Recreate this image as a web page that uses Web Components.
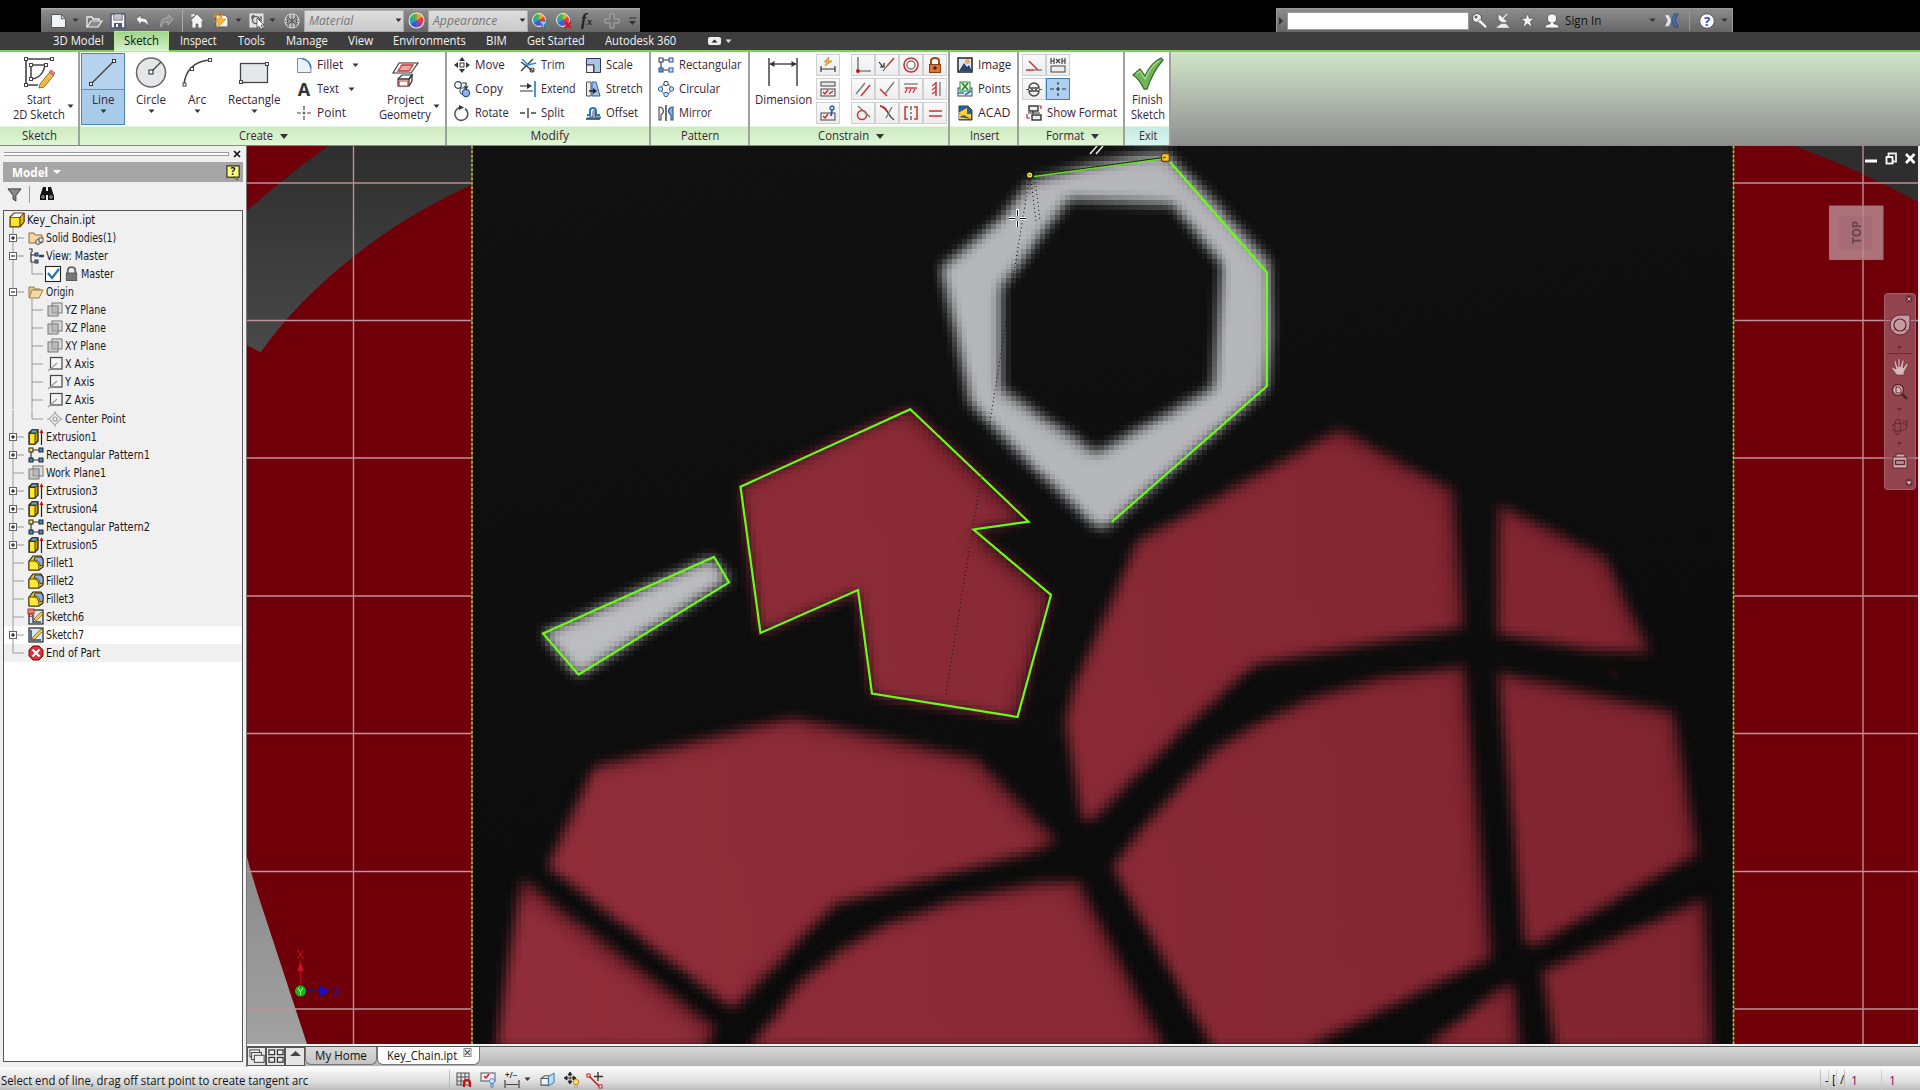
<!DOCTYPE html>
<html lang="en"><head><meta charset="utf-8"><title>Key_Chain.ipt</title>
<style>html,body{margin:0;padding:0;background:#000;overflow:hidden}body{width:1920px;height:1090px}</style></head>
<body><cad-app></cad-app>
<script>
const UI='"Open Sans","Noto Sans",sans-serif', TREE='"DejaVu Sans Condensed","DejaVu Sans",sans-serif';
const P=(d,s='#333',w=1.3,f='none')=>`<path d="${d}" stroke="${s}" stroke-width="${w}" fill="${f}"/>`;
const sq=(x,y,c='#444',f='#fff',r=1.5)=>`<rect x="${x-r}" y="${y-r}" width="${2*r}" height="${2*r}" fill="${f}" stroke="${c}"/>`;
const C=(x,y,r,s='#333',w=1.2,f='none')=>`<circle cx="${x}" cy="${y}" r="${r}" stroke="${s}" stroke-width="${w}" fill="${f}"/>`;
const B=(x,y,w,h,f='#fff',s='#333',sw=1)=>`<rect x="${x}" y="${y}" width="${w}" height="${h}" fill="${f}" stroke="${s}" stroke-width="${sw}"/>`;
const wheel=(x=8,y=8,r=7)=>`<g transform="translate(${x} ${y})">`+['#f0a020','#e8384a','#9a3cc0','#3a5ad8','#28a0c8','#40b848'].map((c,i)=>`<path transform="rotate(${i*60})" d="M0 0V${-r}A${r} ${r} 0 0 1 ${r*.866} ${-r*.5}Z" fill="${c}"/>`).join('')+`<circle r="${r}" fill="none" stroke="#eee"/></g>`;
const I={
caret:P('M1 1h5l-2.500 3z','none',0,'#333'), caretw:P('M0 0h8l-4 4z','none',0,'#fff'),
/* quick access */
new:P('M1.500 1.500h10l4 4v9h-14z','#555',1,'#f3f4f6')+P('M11.500 1.500v4h4','#777'),
open:P('M1 14V4h5l1 2h6v2','#eee',1.3,'#777')+P('M1 14l4-6h11l-4 6z','#eee',1.2,'#8c8c8c'),
save:B(1,1,14,14,'#f4f4f4','#4d5b74',1.5)+B(4,1,8,6,'#fff','#59606c')+P('M5 3h6M5 5h6','#888',1)+B(4,10,8,5,'#4d5b74','none')+B(6,11,2,3,'#fff','none'),
undo:P('M2 6l5-4v3c5 0 8 2 7 9c-1-4-3-5-7-5v3z','#555',.7,'#f5f5f5'),
redo:P('M14 6l-5-4v3c-5 0-8 2-7 9c1-4 3-5 7-5v3z','#bbb',.8,'#8c8c8c'),
home:P('M1 8L8 1l7 7h-2v7h-4v-4H7v4H3V8z','#666',.8,'#f5f5f5')+P('M3 4V2h2v1','#eee'),
bolt:P('M3 2h9l3 3v9H3z','#555',1,'#f4f4f4')+P('M10 0L2 9h4l-2 6l9-9H8z','#d47c00',.6,'#ffb62e')+P('M1 4l4-3','#d90',2),
pick:B(1,1,13,13,'#ddd','#eee')+C(7,7,3.500,'#555')+P('M3 3h3M3 3v3M12 3v8','#555')+P('M8 5l7 7h-3l2 4l-2 0l-2-3l-2 2z','#333',.7,'#fff'),
sphere:C(8,8,7,'#eee',1,'#bbb')+P('M1 8h14M8 1v14M3 3l10 10M13 3L3 13M2 5c4 2 8 2 12 0M2 11c4-2 8-2 12 0M5 2c-2 4-2 8 0 12M11 2c2 4 2 8 0 12','#555',.8),
wheel:wheel(), wheel2:wheel(7,7,6.500)+P('M7 8h9l-3.500 4v3h-2v-3z','#167',.7,'#6fd0f0'), wheel3:wheel(7,7,6.500)+P('M9 9l6 6M15 9l-6 6','#d01818',2.200),
plus:P('M6 1h4v5h5v4h-5v5H6v-5H1V6h5z','#a8a8a8',1,'#777'),
/* help strip */
key:C(5,5,4.500,'#555',1,'#eee')+P('M8 6l7 7l-1 3L8.500 11l-3-2z','#555',.6,'#eee')+C(4,4,1,'#555',1,'#555'),
dish:P('M3 1c-3 6 3 12 9 8z','#555',.7,'#f4f4f4')+P('M7 6l5-5M2 15h11l-3-3H6z','#eee',1.300,'#eee'),
star:P('M8 .5l2 5.200h5.500L11 9l2 6.500L8 11.500L3 15.500L5 9L.5 5.700H6z','#555',.8,'#f4f4f4'),
man:C(8,5.500,4.500,'#444',.8,'#f4f4f4')+P('M6 9h4v2c3 0 5 1 5 4H1c0-3 2-4 5-4z','#444',.7,'#f4f4f4')+C(8,5.500,4,'none',0,'#f4f4f4'),
xch:P('M1 2h4l3 6l-3 6H1l3-6z','#999',.6,'#e3e9f4')+P('M15 1h-4L8 8l3 7h4l-3-7z','#234',.6,'#4869b8'),
help:C(8,8,7.300,'#555',1,'#f8f8f8')+`<text x="8" y="13" font-family='Open Sans' font-weight="700" font-size="13" text-anchor="middle" fill="#2858b8">?</text>`,
/* large tools */
start:P('M2 2h26M2 2v26h12','#444',1.600)+P('M7 8h16M7 8v14c6 0 12-4 14-14','#444',1.500)+sq(2,2)+sq(28,2)+sq(2,28)+sq(7,8)+sq(22,8)+sq(7,22)+P('M16 27l10-12l4 3L20 30l-5 1z','#8a5b12',.9,'#f0bc4c')+P('M25 15l2-2l4 3l-2 2z','#944',.7,'#e88'),
line:P('M2 28L26 4','#444',1.500)+sq(3,27,'#333')+sq(26,4,'#333'),
circle:`<circle cx="15" cy="15.500" r="14.500" fill="#e6e7e9" stroke="#666" stroke-width="1.500"/>`+P('M15 15L25 5','#444',1.300)+sq(15,15,'#222','#fff',2),
arc:P('M2 28C3 14 12 4 28 3','#444',1.500)+sq(2.500,27.500)+sq(10,12)+sq(28,3),
rect:B(1.500,6.500,27,19,'#e5e7ea','#444',1.300)+sq(28,7)+sq(2,25),
project:P('M9 6h19l-7 10H3z','#333',1.100,'#fff')+P('M12 8h11l-4 6H8z','#c33',1.300,'#eaa')+P('M8 22l4-4h10l-3 4v7H8z','#333',1.200,'#fff')+P('M8 22h11l3-4v6l-3 5','#333')+P('M9 24h9v5H9z','#c33',1.200,'#fff'),
dim:P('M1 1v28M29 1v28','#444',1.500)+P('M2 7h26','#444',1.400)+P('M1.500 7l5-3v6zM28.500 7l-5-3v6z','none',0,'#333'),
check:P('M2 18l7-6l5 7C18 10 23 4 30 1l2 2C25 11 20 20 16 32h-3C10 26 7 21 2 18z','#3d6f30',1.300,'#6fb558')+P('M5 17l4-3l5 8C18 13 23 7 28 4','#a8dc90',1.200),
/* small tools */
fillet:P('M1.500 15.500V1.500H6c6 1 9 6 9 14z','#888',1,'#e9f1f9')+P('M6 1.500c6 1 9 6 9 10','#2f7fcf',1.600),
text:`<text x="8" y="14.500" font-family='Open Sans' font-weight="700" font-size="18" text-anchor="middle" fill="#333">A</text>`,
point:P('M8 1v4M8 11v4M1 8h4M11 8h4M6.500 8h3M8 6.500v3','#444',1.200),
move:B(6,6,4,4,'#fff','#333')+P('M8 0l3 4H5zM8 16l3-4H5zM0 8l4-3v6zM16 8l-4-3v6z','none',0,'#333'),
copy:C(4,4,3.300,'#345')+P('M8 2h4v5M10 5l2 3l2-3','#333',1.200)+C(9,10,3.300,'#456',1,'#dce9f6')+C(12,12,3.600,'#2450a0',1.200,'#8fb4e0'),
rotate:P('M11 3.500A6.500 6.500 0 1 1 6 2.500','#555',1.600)+P('M5 0l5 2.500L5 5z','none',0,'#333'),
trim:P('M1 5l12 9M1 14L13 2','#444',1.500)+P('M2 2l6 6M8 8l8-2','#2a90d8',1.600)+C(12,13,2,'#444'),
extend:P('M0 5h10','#444',1.200)+P('M7 2l5 3l-5 3z','none',0,'#333')+P('M0 10h13','#555',1.200)+P('M15 0v16','#2a8fd8',1.800),
split:P('M0 8h5M11 8h5M8 3v10','#444',1.400),
scale:P('M1.500 1.500h14v14H9V8H1.500z','#335',1,'#a9c6e6')+B(1.500,8,7,7.500,'#eee','#444'),
stretch:P('M1.500 1v14H6V1z','#555',1,'#eee')+P('M7 1h4l4 14H7z','#2a5fa8',1,'#9fc1e6')+P('M4 10h5','#222',1.500)+P('M8 7l4 3l-4 3z','none',0,'#222'),
offset:P('M1 14h14M2 10h3V6c0-4 6-4 6 0v4h4','#2a78c0',2)+P('M2 13h14M4 12h4V7c0-2 2-2 2 0v5h6','#345',1),
rpat:P('M4 3h8M3 5v6M4 13h8','#333',1.100)+B(1,1,4,4,'#fff','#234')+B(11,1,4,4,'#cfe0f5','#2450a0')+B(1,11,4,4,'#6c9adf','#2450a0')+B(11,11,4,4,'#cfe0f5','#2450a0'),
cpat:C(8,8,5,'#555',1)+C(8,2.500,2.200,'#333',1,'#fff')+C(8,13.500,2.200,'#2a5fa8',1,'#cfe0f5')+C(2.500,8,2.200,'#2a5fa8',1,'#cfe0f5')+C(13.500,8,2.200,'#2a5fa8',1,'#cfe0f5'),
mirror:P('M8 0v16','#333',1.400)+P('M1 15V2c4 0 5 3 4 6L3 10v5z','#444',1.100,'#fff')+P('M15 15V2c-4 0-5 3-4 6l2 2v5z','#2450a0',1.100,'#8fb4e0'),
autod:P('M9 0L4 5h3l-2 4l7-5H8z','#c47400',.6,'#ffb62e')+P('M1 9v6M15 9v6M1 12h14','#333',1.200),
parm:B(1,1,14,4,'#e8e8e8','#444')+B(1,8,14,7,'#eee','#444')+P('M3 11l2 2l3-4M9 13l4-3','#c22',1.300),
parm2:B(1,8,14,7,'#eee','#444')+P('M3 11l2 2l3-4','#c22',1.300)+P('M11 11l1-6','#2a5fa8',1.800)+C(12,3,2,'#2a5fa8',1.300,'#cfe0f5'),
coin:P('M3 0v12','#555',1.200)+P('M5 14h11','#555',1)+C(3,14,1.200,'#c11',1.500,'#c11'),
coll:P('M0 5l4 5M1 10h4v-4','#222',1.200)+P('M4 14l4-5','#555',1.200)+P('M8 9l7-8','#c33',1.500),
conc:C(8,8,7,'#c33',1.600)+C(8,8,4,'#777',1.400,'#fff'),
lock:P('M4 8V4c0-4 8-4 8 0v4','#9b4a20',2)+B(2.500,7.500,11,8,'#d8733a','#8b3d18')+C(8,11,1.300,'#521','1','#521'),
para:P('M1 13L10 2','#777',1.300)+P('M6 15L15 4','#c33',1.500),
perp:P('M15 1L6 13','#777',1.300)+P('M1 8l7 7','#c33',1.500),
horiz:P('M1 3h14','#777',1.300)+P('M2 7h12','#c33',1.400)+P('M4 8l-2 4M8 8l-2 4M12 8l-2 4','#c33',1.200),
vert:P('M13 1v14','#777',1.300)+P('M9 1v14','#c33',1.500)+P('M9 2L5 5M9 6L5 9M9 10l-4 3','#c33',1.200),
tang:C(7,10,4.500,'#c33',1.500)+P('M3 1l12 11','#777',1.300),
smooth:P('M1 1c9 1 6 9 14 14','#444',1.300)+P('M1 1c4 1 6 4 7 6','#c33',1.300)+P('M13 2L7 13','#777',1.300),
sym:P('M5 2H2v12h3M11 2h3v12h-3','#c33',1.500)+P('M8 1v4M8 7v2M8 11v4','#555',1.300),
eq:P('M2 6h13M2 11h13','#c33',1.500),
image:B(1,1,14,14,'#dceaf8','#222',1.500)+P('M2 14l5-8l3 4l2-2l3 6z','none',0,'#2a456c')+C(10.500,4.500,1.800,'#e8842c',1,'#ffb74a'),
points:B(1,7,14,8,'#eee','#445')+B(3,1,10,9,'#e7f5e4','#2a8a3a')+P('M5 2l6 7M11 2L5 9','#2a8a3a',1.800)+P('M1 12h6M8 14l6-4','#2a78c0',1.600),
acad:P('M2 1h9l4 4v10H2z','#345',1,'#2a5fa8')+P('M1 8l9-5v8z','none',0,'#ffd32c')+P('M2 9h12v5H2z','none',0,'#f0d040')+P('M2 12l5-2l7 4z','none',0,'#557'),
constr:P('M0 13h8','#c33',1.500)+P('M3 4l9 9','#c33',1.500)+P('M8 13h8','#777',1.300),
driven:P('M1 1v6M15 1v6M4 1v6M12 1v6M1 4h3M12 4h3M6 2l4 4M10 2L6 6','#333',1.100)+B(1,9,14,6,'#eee','#444'),
center:P('M3 7a5 5 0 0 1 10 0zM3 10a5 5 0 0 0 10 0z','#444',1.400)+P('M0 8.500h3M5 8.500h2M9 8.500h2M13 8.500h3','#555',1.200),
cpoint:P('M0 8h4M12 8h4M8 1v3M8 12v3M6 8h4M8 6v4','#333',1.200),
sform:B(3,1,9,5,'#eee','#222',1.300)+B(6,10,9,5,'#eee','#222',1.300)+P('M13 1h2v3M1 9v4h3','#c22',1.200)+P('M2 8h12M7 6v3','#333',1.200),
/* browser */
funnel:P('M1 2h14L9.500 9v6l-3-2V9z','#333',1,'#8b8b8b'),
bino:P('M4 1h3v4h2V1h3l3 9v4H9V9H7v5H1v-4z','none',0,'#111')+C(4,11,1.300,'#ccc',.8)+C(12,11,1.300,'#ccc',.8),
q:B(1,1,13,12,'#ffff7d','#222',1.200)+P('M8 13l4 3v-3z','#222',.8,'#ff8')+`<text x="7.500" y="11" font-family='Open Sans' font-weight="700" font-size="11" text-anchor="middle" fill="#111">?</text>`,
part:P('M1 5l4-4h10v9l-4 5H1z','#5a3c00',1.100,'#fff')+B(1.500,5.500,9.500,9,'#ffe524','#7a5a10')+P('M11 14V5l4-4v9z','#5a3c00',1,'#e4b818'),
bodies:P('M1 13V3h5l1 2h7v8z','#8a6d3b',1,'#f0d8a6')+C(10,12,2.500,'#555',1,'#ddd')+B(11,8,4,4,'#eee','#555'),
view:P('M1 1h3v3M3 4v10h4M3 7h4','#333',1.200)+B(7,5,3,3,'#5a8cd0','#234')+B(7,12,3,3,'#5a8cd0','#234')+P('M11 8h5','#246',2.500),
lockg:P('M4 8V5c0-5 8-5 8 0v3','#666',2)+B(2.500,7.500,11,8,'#777','#555'),
chk:B(.5,.5,15,15,'#fff','#222',1.100)+P('M3 7l4 5l7-9','#2a6fb0',2.200),
folder:P('M1 13V3h5l1 2h5v2','#9a7b43',1,'#e6c98c')+P('M1 14l3-8h11l-4 8z','#9a7b43',1,'#f3dba8'),
plane:B(5,1,10,10,'#ddd','#777')+B(1,4,10,10,'#c9c9c9','#777')+B(5,4,6,7,'#b9b9b9','#888',.8),
axis:B(3.500,1.500,11.500,11.500,'#f4f4f4','#444',1.200)+P('M1 15l9-8','#999',1.200),
cpt:P('M8 2l6 6l-6 6l-6-6z','#aaa',1.200)+C(8,8,2,'#999')+P('M8 0v3M8 13v3M0 8h3M13 8h3','#aaa',1),
extr:P('M1 4l3-3h6v11l-3 3H1z','#222',1.300,'#c8a000')+B(1.500,4.500,5.500,10.500,'#ffe936','#554000')+P('M2 4l2-3h6l-2 3z','#222',.8,'#7aa6d0')+P('M13.500 16V4','#222',1.200)+P('M11.500 4l2-4l2 4z','none',0,'#c11'),
pat:P('M5 3h6M3 5v6M5 13h6','#333',1.200)+B(1,1,4,4,'#ffe936','#222')+B(11,1,4,4,'#4a86c8','#222')+B(1,11,4,4,'#4a86c8','#222')+B(11,11,4,4,'#4a86c8','#222'),
fil:P('M1 6l4-5h8l2 3v8l-4 3H1z','#222',1.200,'#f2cf10')+P('M1 6h6c3 1 4 4 4 9H1z','#554000',1,'#ffe936')+P('M7 2h6l2 3v5l-3 1c0-4-2-6-6-6z','#223',.8,'#8fb0e0'),
sk:B(1,1,14,14,'#d8e8f6','#222',1.200)+P('M3 3v10h10','#345',1.500)+P('M5 10l8-8l2 2l-8 8l-3 1z','#8a5b12',.8,'#f0cc4c'),
sk6:B(1,1,14,14,'#d8e8f6','#222',1.200)+P('M5 6v7h8','#345',1.500)+P('M6 10l7-7l2 2l-7 7z','#8a5b12',.8,'#f0cc4c')+B(0,0,6,5,'#e98060','#a33')+C(3,6,1.500,'#a33'),
end:P('M5 1h6l4 4v6l-4 4H5l-4-4V5z','#800',1,'#d8323e')+P('M4.500 4.500l7 7M11.500 4.500l-7 7','#fff',2.200),
/* window and status */
casc:B(1,1,11,8,'#eee','#333')+B(3,4,11,8,'#eee','#333')+B(6,7,11,8,'#eee','#333'),
tile:B(1,1,6,5,'#eee','#333',1.300)+B(10,1,6,5,'#eee','#333',1.300)+B(1,9,6,5,'#eee','#333',1.300)+B(10,9,6,5,'#eee','#333',1.300),
up:P('M3 7l5.500-5l5.500 5z','none',0,'#444'),
close:B(1,.5,7,8,'none','#888')+P('M2 2l5 5M7 2L2 7','#555',1.100),
grid:P('M1 1h12v12H1zM5 1v12M9 1v12M1 5h12M1 9h12','#555',1.100)+P('M8 15v-4c0-4 6-4 6 0v4','#c11',2.200),
snap:B(1,1,14,8,'#eef','#555')+P('M4 4l2 2l3-4','#c11',1.300)+C(12,9,2.500,'#58c',1,'#cde6fa')+B(11,12,2,3,'#cde','#58c'),
tol:`<text x="1" y="6" font-family="Open Sans" font-size="8" font-weight="600" fill="#222">+/−</text>`+P('M1 8v8M15 8v8M2 12.500h12','#444',1.200),
slice:P('M1 7h8v7H1zM1 7l4-3h5','#555',1.100,'#f2f2f2')+P('M9 5l6-4v10l-6 4z','#3470a8',1,'#b8dcf4'),
dof:P('M6 0l2 3H4zM6 12l2-3H4zM0 6l3-2v4zM12 6l-3-2v4zM6 2v8M2 6h8','#222',.8,'#222')+C(12,10,2.700,'#d08a10',1,'#ffe060')+B(11,13,2,2.500,'#eee','#888',.6),
con:P('M1 3l12 12','#c11',1.500)+B(0,2,3,3,'#fff','#c11')+B(12,13,3,3,'#fff','#c11')+P('M11 0v9M7 4.500h9','#333',1.300)
};
const ic=(n,s=16,vb=16)=>`<svg width="${s}" height="${s}" viewBox="0 0 ${vb} ${vb}" style="display:block;overflow:visible">${I[n]}</svg>`;
const car=(c='#333')=>`<svg width="7" height="5" viewBox="0 0 7 5" style="display:block"><path d="M.5 .5h6l-3 3.500z" fill="${c}"/></svg>`;
const T=(t,w,extra='')=>`<fit-text w="${w}" ${extra?`style="${extra}"`:''}>${t}</fit-text>`;
/* Builds flex items from [left, width, markup], turning the spacing between them into margins. */
const row=(start,items)=>{let x=start;return items.map(([l,w,h,s=''])=>{const m=l-x;x=l+w;return `<div style="flex:none;margin-left:${m}px;width:${w}px;${s}">${h}</div>`}).join('')};
const define=(name,render,after)=>customElements.define(name,class extends HTMLElement{
 constructor(){super();this.attachShadow({mode:'open'})}
 connectedCallback(){this.shadowRoot.innerHTML=render(this);after&&after(this)}
});

define('fit-text',e=>`<style>:host{display:inline-block;width:${e.getAttribute('w')}px;white-space:pre;flex:none}span{display:inline-block;transform-origin:0 50%}</style><span><slot></slot></span>`,
 e=>{const s=e.shadowRoot.querySelector('span'),n=s.offsetWidth;if(n)s.style.transform=`scaleX(${e.getAttribute('w')/n})`});

define('quick-bar',()=>`<style>:host{display:block;width:599px;height:24px;margin-left:41px;background:linear-gradient(#999,#8a8a8a 10%,#666);border-top:1px solid #aaa;box-sizing:border-box}
.r{display:flex;align-items:center;height:23px}.c{height:20px;background:linear-gradient(#dedede,#c9c9c9);box-shadow:0 0 0 1px #aaa;display:flex;align-items:center;justify-content:space-between;padding:0 1px 0 4px;box-sizing:border-box;font:italic 12px ${UI};color:#777}.f{font:italic 700 17px "Liberation Serif",serif;line-height:18px;color:#222;white-space:nowrap}.f small{font-size:11px}</style>
<div class="r">${row(41,[[50,16,ic('new')],[72,7,car()],[86,16,ic('open')],[110,16,ic('save')],[134,16,ic('undo')],[159,16,ic('redo')],[182,1,'','height:22px;background:#aaa'],[189,16,ic('home')],[213,16,ic('bolt')],[235,7,car()],[249,16,ic('pick')],[269,7,car()],[284,16,ic('sphere')],[305,98,`<div class="c">${T('Material',44)}${car()}</div>`],[408,17,ic('wheel',17)],[429,98,`<div class="c">${T('Appearance',64)}${car()}</div>`],[532,16,ic('wheel2')],[556,16,ic('wheel3')],[581,16,'<div class="f">f<small>x</small></div>'],[604,16,ic('plus')],[629,7,'<svg width="7" height="8" style="display:block"><path d="M0 1h7" stroke="#333"/><path d="M0 4h7l-3.500 4z" fill="#333"/></svg>']])}</div>`);

define('help-bar',()=>`<style>:host{display:block;width:457px;height:24px;margin-left:636px;background:linear-gradient(#8c8c8c,#666);border:1px solid #999;border-bottom:0;box-sizing:border-box}.r{display:flex;align-items:center;height:23px;font:12px ${UI};color:#111}</style>
<div class="r">${row(1278,[[1280,5,'<svg width="5" height="8" style="display:block"><path d="M0 0l4 4l-4 4z" fill="#333"/></svg>'],[1289,180,'','height:16px;background:#fff;box-shadow:0 0 0 1px #999'],[1473,16,ic('key')],[1497,15,ic('dish',15)],[1521,15,ic('star',15)],[1545,16,ic('man')],[1566,36,T('Sign In',36)],[1650,7,car()],[1665,15,ic('xch',15)],[1690,1,'','height:20px;background:#999'],[1700,16,ic('help')],[1722,7,car()]])}</div>`);

define('ribbon-tabs',()=>`<style>:host{display:flex;height:18px;background:#3d3d3d;border-bottom:2px solid #7ccf52;align-items:center;font:12px/18px ${UI};color:#f4f4f4}</style>
${row(0,[[53,51,T('3D Model',51)],[115,53,T('Sketch',35),'background:linear-gradient(#9ed588,#d9f2cf);color:#111;height:19px;text-align:center;box-shadow:0 0 0 1px #b4e89c'],[180,37,T('Inspect',37)],[238,27,T('Tools',27)],[286,42,T('Manage',42)],[348,25,T('View',25)],[393,73,T('Environments',73)],[486,21,T('BIM',21)],[527,58,T('Get Started',58)],[605,71,T('Autodesk 360',71)],[708,13,'<svg width="13" height="8" style="display:block"><rect width="13" height="8" rx="2" fill="#eee"/><path d="M3.500 5.500l3-3l3 3z" fill="#222"/></svg>'],[725,7,car('#ddd')]])}`);

define('ribbon-panel',e=>`<style>:host{display:flex;flex-direction:column;flex:none;width:${e.getAttribute('w')}px;height:93px;border-right:2px solid #a0a0a0;box-sizing:border-box;font:12px/16px ${UI};color:#3b2433}.b{height:74px;display:flex;background:linear-gradient(#f1fbec,#fff 4px)}.l{height:19px;display:flex;align-items:center;justify-content:center;gap:7px;padding-left:${e.getAttribute('lp')||1}px;background:${e.getAttribute('tone')||'linear-gradient(#cdeac0,#dff7d5)'};border-top:1px solid #e9f5e4;box-sizing:border-box}</style><div class="b"><slot></slot></div><div class="l">${T(e.getAttribute('label'),e.getAttribute('lw'))}${e.hasAttribute('menu')?'<svg width="8" height="5"><path d="M0 0h8l-4 5z" fill="#333"/></svg>':''}</div>`);

define('big-tool',e=>{const a=e.getAttribute.bind(e),on=e.hasAttribute('on'),s=+a('s')||30;return `<style>:host{display:block;flex:none;width:${a('w')}px;height:72px;margin:1px 0 0 ${a('ml')||0}px;box-sizing:border-box;${on?'background:linear-gradient(#b5d3ee 36px,#5f93c4 36px 37px,#a9cbea 37px);box-shadow:inset 0 0 0 1px #4b82b8;':''}}.i{height:39px;padding-top:4px;box-sizing:border-box;display:flex;justify-content:center}.t{height:15px;line-height:15px;display:flex;justify-content:center;align-items:center}.c{height:8px;display:flex;justify-content:center;padding-top:2px}.s{position:relative}.s svg{position:absolute;right:-9px;top:-3px}</style><div class="i">${ic(a('icon'),s,s)}</div><div class="t">${T(a('l1'),a('w1'))}</div>${a('l2')?`<div class="t"><span class="s">${T(a('l2'),a('w2'))}${e.hasAttribute('menu')?car():''}</span></div>`:e.hasAttribute('menu')?`<div class="c">${car()}</div>`:''}`});

define('tool-list',e=>`<style>:host{display:flex;flex-direction:column;flex:none;width:${e.getAttribute('w')}px;margin-left:${e.getAttribute('ml')||0}px;margin-top:${e.getAttribute('mt')||1}px}div{height:24px;display:flex;align-items:center;gap:5px;box-sizing:border-box}div>svg:last-child{margin-left:4px}</style>${e.getAttribute('items').split(';').map(r=>{const[i,t,w,m]=r.split(',');return `<div>${ic(i)}${T(t,w)}${m?car():''}</div>`}).join('')}`);

define('tool-grid',e=>`<style>:host{display:grid;flex:none;grid-template-columns:repeat(${e.getAttribute('cols')},24px);grid-auto-rows:22px;row-gap:2px;margin:${e.getAttribute('m')};height:max-content}div{display:flex;align-items:center;justify-content:center;background:linear-gradient(#fafafa,#ececee);box-shadow:inset 0 0 0 1px #cfd0d2}.on{background:#aed0ee;box-shadow:inset 0 0 0 1px #3f7fb8}</style>${e.getAttribute('items').split(',').map(i=>`<div class="${i=='cpoint'?'on':''}">${ic(i)}</div>`).join('')}`);

define('cad-ribbon',()=>`<style>:host{display:flex;height:93px;background:linear-gradient(#cfe6c6,#b4bdb1 45%,#8e8e8e);border-bottom:1px solid #888}.v{width:1px;height:72px;background:#c4c4c4;margin-top:1px}.f{display:flex;flex-direction:column}</style>
<ribbon-panel w="80" label="Sketch" lw="35" lp="0"><big-tool w="78" icon="start" l1="Start" w1="24" l2="2D Sketch" w2="52" menu></big-tool></ribbon-panel>
<ribbon-panel w="367" label="Create" lw="34" menu><big-tool w="44" ml="1" icon="line" l1="Line" w1="22" menu on></big-tool><big-tool w="52" icon="circle" l1="Circle" w1="30" menu></big-tool><big-tool w="40" icon="arc" l1="Arc" w1="18" menu></big-tool><big-tool w="74" icon="rect" l1="Rectangle" w1="52" menu></big-tool><tool-list ml="5" w="68" items="fillet,Fillet,26,1;text,Text,22,1;point,Point,29"></tool-list><div class="v"></div><big-tool w="80" ml="1" icon="project" l1="Project" w1="37" l2="Geometry" w2="52" menu></big-tool></ribbon-panel>
<ribbon-panel w="204" label="Modify" lw="38" lp="3"><tool-list ml="7" w="66" items="move,Move,30;copy,Copy,28;rotate,Rotate,34"></tool-list><tool-list w="65" items="trim,Trim,24;extend,Extend,35;split,Split,23"></tool-list><tool-list w="62" items="scale,Scale,27;stretch,Stretch,37;offset,Offset,32"></tool-list></ribbon-panel>
<ribbon-panel w="99" label="Pattern" lw="38"><tool-list ml="7" w="85" items="rpat,Rectangular,63;cpat,Circular,41;mirror,Mirror,33"></tool-list></ribbon-panel>
<ribbon-panel w="200" label="Constrain" lw="51" lp="4" menu><big-tool w="66" icon="dim" l1="Dimension" w1="57"></big-tool><tool-grid cols="1" m="2px 11px 0 0" items="autod,parm,parm2"></tool-grid><tool-grid cols="4" m="2px 0 0 0" items="coin,coll,conc,lock,para,perp,horiz,vert,tang,smooth,sym,eq"></tool-grid></ribbon-panel>
<ribbon-panel w="69" label="Insert" lw="29"><tool-list ml="7" w="60" items="image,Image,33;points,Points,33;acad,ACAD,32"></tool-list></ribbon-panel>
<ribbon-panel w="106" label="Format" lw="38" lp="2" menu><div class="f"><tool-grid cols="2" m="2px 0 0 3px" items="constr,driven,center,cpoint"></tool-grid><tool-list ml="7" w="96" items="sform,Show Format,70"></tool-list></div></ribbon-panel>
<ribbon-panel w="46" label="Exit" lw="18" tone="linear-gradient(#c5ebe0,#d8f6ee)"><big-tool w="45" s="33" icon="check" l1="Finish" w1="31" l2="Sketch" w2="34"></big-tool></ribbon-panel>`);

define('tree-row',e=>{const a=e.getAttribute.bind(e),d=+a('d'),x=a('x'),last=e.hasAttribute('last'),root=d==0;
 const g=[];if(root)g.push('M9 14V18');else g.push(last?'M9 0V9H20':'M9 0V18');
 if(d==1&&!last)g.push('M9 9H20');if(d==2)g.push(a('i')=='cpt'||a('i')=='chk'?'M28 0V9H39':'M28 0V18M28 9H39');if(a('i')=='folder'||a('i')=='view')g.push('M28 16V18');
 const w=[6,25,a('i')=='chk'?42:44][d];
 return `<style>:host{display:flex;height:18.050px;align-items:center;background:${e.hasAttribute('sel')?'#fff':'#f0f0f0'};font:12px/18px ${TREE};color:#18181c}.g{flex:none;width:${w-1}px;height:18px;display:block;overflow:visible}.i{flex:none;display:flex;gap:3px;margin-right:2px}</style><svg class="g"><path d="${g.join('')}" fill="none" stroke="#999"/>${x?`<rect x="5.500" y="5.500" width="7" height="7" fill="#fff" stroke="#666"/><path d="M7 9h4${x=='+'?'M9 7v4':''}" stroke="#000"/>`:''}</svg><div class="i">${ic(a('i'))}${a('i')=='chk'?ic('lockg',15,16):''}</div>${T(e.getAttribute('t'),a('w'))}`});

const nodes=[[0,'part','Key_Chain.ipt',68],[1,'bodies','Solid Bodies(1)',70,'+'],[1,'view','View: Master',62,'-'],[2,'chk','Master',33],[1,'folder','Origin',28,'-'],[2,'plane','YZ Plane',41],[2,'plane','XZ Plane',41],[2,'plane','XY Plane',41],[2,'axis','X Axis',29],[2,'axis','Y Axis',29],[2,'axis','Z Axis',29],[2,'cpt','Center Point',61],[1,'extr','Extrusion1',51,'+'],[1,'pat','Rectangular Pattern1',104,'+'],[1,'plane','Work Plane1',60],[1,'extr','Extrusion3',52,'+'],[1,'extr','Extrusion4',52,'+'],[1,'pat','Rectangular Pattern2',104,'+'],[1,'extr','Extrusion5',52,'+'],[1,'fil','Fillet1',28],[1,'fil','Fillet2',28],[1,'fil','Fillet3',28],[1,'sk6','Sketch6',38],[1,'sk','Sketch7',38,'+','sel'],[1,'end','End of Part',54,'','last']];
define('model-browser',()=>`<style>:host{display:flex;flex-direction:column;flex:none;width:247px;height:921px;background:#f0f0f0;border-right:1px solid #777;box-sizing:border-box}
.g{display:flex;height:16px;align-items:center;padding:0 5px 0 4px;justify-content:space-between}.g i{width:224px;height:2px;border:solid #999;border-width:1px 1px 1px 0;background:#fff}
.h{display:flex;align-items:center;height:20px;margin:0 3px;background:#a6a6a6;color:#fff;font:700 12px ${UI};padding:0 2px 0 9px;gap:5px}.h b{flex:1}
.t{display:flex;align-items:center;height:24px}.t i{width:1px;height:17px;background:#999;margin:0 9px 0 7px}
.b{margin:4px 3px 0;border:1px solid #555;background:#fff;height:850px}</style>
<div class="g"><i></i><svg width="8" height="8"><path d="M1 1l6 6M7 1l-6 6" stroke="#111" stroke-width="1.700"/></svg></div>
<div class="h">${T('Model',36)}<svg width="8" height="4">${I.caretw}</svg><b></b>${ic('q',15)}</div>
<div class="t"><span style="width:7px"></span>${ic('funnel',15)}<i></i>${ic('bino')}</div>
<div class="b">${nodes.map(n=>`<tree-row d="${n[0]}" i="${n[1]}" t="${n[2]}" w="${n[3]}" x="${n[4]||''}" ${n[5]||''}></tree-row>`).join('')}</div>`);

const ring=[[[1030,181],[1085,166],[1133,156],[1166,152],[1219,206],[1270,262],[1272,335],[1267,388],[1106,528],[1096,527],[1030,465],[970,403],[956,335],[941,267],[1000,220]],[[1070,199],[1002,288],[1002,388],[1097,452],[1213,387],[1222,265],[1173,205]]];
const tiles=[
[[910,407],[741,485],[760,634],[858,592],[872,695],[1017,718],[1051,595],[974,530],[1029,521]],
[[594,766],[793,717],[977,759],[1057,841],[1040,849],[835,904],[736,1007],[727,1005],[548,866]],
[[522,879],[716,1027],[700,1060],[495,1060],[509,960]],
[[740,1060],[801,981],[840,950],[888,923],[954,899],[1040,882],[1079,881],[1172,1060]],
[[1340,429],[1453,490],[1464,627],[1315,653],[1256,664],[1200,715],[1093,820],[1082,818],[1065,722],[1074,686],[1138,541]],
[[1499,504],[1606,557],[1650,652],[1590,649],[1498,633]],
[[1112,866],[1152,816],[1214,750],[1260,722],[1309,699],[1382,678],[1464,665],[1492,957],[1280,1060],[1220,1060]],
[[1498,671],[1674,712],[1698,853],[1539,944],[1525,944]],
[[1704,898],[1714,1060],[1558,1060],[1542,970]],
[[1514,985],[1522,1060],[1408,1060],[1500,987]]];
const slash=[[542,634],[712,556],[730,580],[578,676]];
const grid=[183,320.500,458,596,733.500,871.500,1009];
const nb=(y)=>`<path d="M1896.500 ${y}h6l-3 3z" fill="#6b2c34"/>`;
define('model-viewport',()=>`<style>:host{display:block;position:relative;flex:none;width:1671px;height:898px;overflow:hidden;background:#6f000a}svg{position:absolute;left:0;top:0;display:block}.clip{position:absolute;left:225px;top:0;width:1262px;height:898px;overflow:hidden}.clip canvas{display:block;width:1264.200px;height:901.600px;image-rendering:pixelated}</style>
<svg width="1671" height="898" viewBox="247 146 1671 898"><defs><linearGradient id="a" x1="0" y1="146" x2="0" y2="1044" gradientUnits="userSpaceOnUse"><stop offset="0" stop-color="#2e2e2e"/><stop offset="1" stop-color="#a2a2a2"/></linearGradient></defs>
<path d="M247 211Q285 177 328 146H473V184.500Q408 213 353 257Q296 302 260.500 352.500L247 345z" fill="url(#a)"/><path d="M247 857Q253 880 262 907L307 1044H247z" fill="url(#a)"/><path d="M1795 146Q1860 170 1918 202V146z" fill="#2e2e2e"/>
${[['247','472'],['1734','1918']].map(([a,b])=>grid.map(y=>`<path d="M${a} ${y}H${b}" stroke="#bb9398" stroke-width="1.500"/>`).join('')).join('')}<path d="M353.500 146V1044M1863 146V1044" stroke="#bb8e94" stroke-width="1.400"/></svg>
<div class="clip"><canvas width="258" height="184"></canvas></div>
<svg width="1671" height="898" viewBox="247 146 1671 898" font-family='Open Sans'>
<path d="M472 146V1044M1733.500 146V1044" stroke="#55550f" stroke-width="1.500"/><path d="M472 146V1044M1733.500 146V1044" stroke="#c4c24a" stroke-width="1.500" stroke-dasharray="2.500 2"/>
<g fill="none" stroke="#6cfa18" stroke-width="2.200"><path d="M910.300 409.300L740.500 486.700L760.500 633L858 590L872 693.500L1017.500 717L1051 595L973.500 529.500L1028.500 521.700Z"/><path d="M543 633.500L714 557L729 582.500L578.500 674.500Z"/><path d="M1170 162L1267 272.500V386L1111.700 522"/></g>
<path d="M1034 175.500L1165 157.500" stroke="#163208" stroke-width="1.600"/><path d="M1034 176.500L1162 159" stroke="#68d92c" stroke-width="1.500"/>
<g stroke="#171717" stroke-width="1.100" stroke-dasharray="1 3"><path d="M1029 180L945.500 697M1031 180L1036 221M1035 178L1040 221"/></g>
<circle cx="1029.700" cy="175" r="4" fill="#111"/><circle cx="1029.700" cy="175" r="2.600" fill="#f0ea28"/><path d="M1028.500 175h2.500" stroke="#333" stroke-width=".8"/>
<rect x="1161.500" y="153.500" width="8" height="8" rx="2" fill="#ffc31e" stroke="#5a4a20" stroke-width="1.500"/><path d="M1163 158l3-1" stroke="#533"/>
<path d="M1009 218.500h6M1020 218.500h6M1017.500 209v7M1017.500 221v6" stroke="#fff" stroke-width="3"/><path d="M1009 218.500h6M1020 218.500h6M1017.500 210v6M1017.500 221v6" stroke="#111" stroke-width="1"/>
<path d="M1090 154l7-8M1096 154l7-8" stroke="#eee" stroke-width="1.500"/>
<path d="M300.500 985V970" stroke="#b00c1c" stroke-width="1.400"/><path d="M297.500 971l3-10l3 10z" fill="#c8141e"/><text x="300.500" y="959" font-size="12" fill="#c8101c" text-anchor="middle">X</text><path d="M306 991h16" stroke="#1010a0" stroke-width="1.500"/><path d="M320 985.500l10 5.500l-10 5.500z" fill="#1212c0"/><circle cx="300.500" cy="991" r="5.500" fill="#12b51c"/><text x="300.500" y="995" font-size="9.500" fill="#c8ff98" text-anchor="middle">Y</text><text x="337" y="995.500" font-size="12" font-weight="600" fill="#1818c0" text-anchor="middle">Z</text>
<rect x="1829.500" y="206" width="53.500" height="53.500" fill="#b27a82" fill-opacity=".93" stroke="#9a767c"/><rect x="1839" y="216" width="33.500" height="33.500" fill="#a56c75"/><path d="M1863 206v53" stroke="#c39aa0" stroke-opacity=".7"/><text transform="translate(1861 232.500) rotate(-90)" font-weight="700" font-size="13" textLength="23" lengthAdjust="spacingAndGlyphs" text-anchor="middle" fill="#6b444a">TOP</text>
<g><rect x="1884.500" y="293.500" width="31" height="196" rx="3" fill="#93454f" stroke="#a4616a"/><path d="M1885 320.500h31M1885 458h31" stroke="#b4838a"/>
<circle cx="1909" cy="299" r="3.700" fill="#6d3239"/><path d="M1907.500 297.500l3 3M1910.500 297.500l-3 3" stroke="#d9b6ba"/><path d="M1890 325a10 10 0 1 0 20 0v-10h-10a10 10 0 0 0-10 10z" fill="#c59aa0" stroke="#63262e"/><circle cx="1900" cy="325" r="6" fill="#c59aa0" stroke="#63262e" stroke-width="1.200"/><path d="M1893.500 331l2-2M1906.500 331l-2-2" stroke="#63262e"/>${nb(346)}<path d="M1887 353.500h26" stroke="#6b2c34"/>
<path d="M1897 375l-5-6c-1-2 1-2 2-1l2 1l-2-7c0-2 2-2 2 0l2 5v-7c0-2 2-2 2 0v7l2-6c1-2 2-1 2 0l-1 7l3-4c1-1 2 0 2 1l-4 7v3z" fill="#d8b6ba" stroke="#63262e" stroke-width=".6"/>
<circle cx="1898" cy="390" r="5.500" fill="#d8b6ba" stroke="#55242a" stroke-width="1.400"/><path d="M1896 387h3l2 2v4h-5z" fill="#d8b6ba" stroke="#63262e"/><path d="M1902 394l5 5" stroke="#55242a" stroke-width="2.500"/>${nb(408)}
<path d="M1898 419c3-1 4 14 0 16c-5-2-4-15 0-16M1892 427c0-5 15-5 15 0c-2 5-13 5-15 2M1903 421h4v5" fill="none" stroke="#6b2c34" stroke-width="1.200"/>${nb(442)}
<path d="M1893 457h14v11h-14zM1896 457v-3h9v3" fill="#d0aab0" stroke="#63262e"/><rect x="1895.500" y="460.500" width="9" height="4" fill="#c090a0" stroke="#63262e" stroke-width="1.300"/><circle cx="1909" cy="482.500" r="3.700" fill="#6d3239"/><path d="M1906.500 481.500h5l-2.500 3z" fill="#e4c6ca"/></g>
<path d="M1865 161h12" stroke="#fff" stroke-width="3"/><path d="M1888.500 156v-2.500h7.500v8h-3" stroke="#eee" stroke-width="1.800" fill="none"/><rect x="1886.500" y="157" width="6" height="6.500" fill="#2e2e2e" stroke="#fff" stroke-width="1.800"/><path d="M1906 154l8.500 9M1914.500 154l-8.500 9" stroke="#fff" stroke-width="2.600"/></svg>`,
e=>{const c=e.shadowRoot.querySelector('canvas').getContext('2d'),k=4.9,X=x=>(x-472)/k,Y=y=>(y-146)/k;
 const path=ps=>{const p=new Path2D;ps.forEach(a=>{a.forEach(([x,y],i)=>i?p.lineTo(X(x),Y(y)):p.moveTo(X(x),Y(y)));p.closePath()});return p};
 let g=c.createLinearGradient(0,0,40,184);g.addColorStop(0,'#111');g.addColorStop(1,'#0b0b0b');c.fillStyle=g;c.fillRect(0,0,258,184);
 const red=c.createLinearGradient(0,120,258,90);red.addColorStop(0,'#912d3a');red.addColorStop(.5,'#882935');red.addColorStop(1,'#80242f');
 const soft=(ps,base,top,dx,dy,bl)=>{const p=path(ps),o=document.createElement('canvas');o.width=258;o.height=184;const q=o.getContext('2d');q.fillStyle=base;q.fill(p,'evenodd');q.globalCompositeOperation='source-atop';q.filter=`blur(${bl}px)`;q.translate(dx,dy);q.fillStyle=top;q.fill(p,'evenodd');c.filter='blur(0.85px)';c.drawImage(o,0,0);c.filter='none'};
 tiles.forEach(t=>soft([t],'#6c1d28',red,-2,1.500,1.600));
 soft(ring,'#9c9ca0','#b6b7bb',-1.200,1,1.300);soft([slash],'#9c9ca0','#bcbdc0',-.3,.3,1);
 c.fillStyle='rgba(90,25,35,.22)';c.fillRect(X(1610),Y(668),2,2)});

define('doc-tabs',()=>`<style>:host{display:flex;height:20px;width:1673px;background:linear-gradient(#d9d9d9,#b4b4b4);border-top:1px solid #555;box-sizing:border-box;font:12px/17px ${UI};color:#111}.k{width:19px;height:19px;border:1px solid #555;background:#e6e6e6;box-sizing:border-box;display:flex;align-items:center;justify-content:center}
.t{height:18px;border:1px solid #777;border-top:0;border-radius:0 0 6px 6px;box-sizing:border-box;background:linear-gradient(#dadada,#c4c4c4);display:flex;align-items:center;padding-left:9px;width:72px}.on{background:#fff;width:103px;gap:6px}</style><div class="k">${ic('casc',16,18)}</div><div class="k">${ic('tile',16,17)}</div><div class="k" style="width:20px">${ic('up',16,16)}</div><div class="t">${T('My Home',52)}</div><div class="t on">${T('Key_Chain.ipt',70)}<svg width="9" height="10" style="margin-bottom:5px">${I.close}</svg></div>`);

define('status-bar',()=>`<style>:host{display:flex;height:23px;border-top:1px solid #fff;background:linear-gradient(#fafafa,#ddd 60%,#b9b9b9);align-items:center;font:12px/22px ${UI};color:#111}</style>${row(0,[[1,307,T('Select end of line, drag off start point to create tangent arc',307),'padding-top:2px'],[449,1,'','height:20px;background:#bbb'],[456,16,ic('grid')],[480,16,ic('snap')],[504,16,ic('tol')],[524,7,car()],[540,15,ic('slice',15)],[564,16,ic('dof')],[587,16,ic('con')],[1820,1,'','height:20px;background:#bbb'],[1825,3,'-','padding-top:2px'],[1828,1,'','height:20px;background:#ccc'],[1832,3,'[','overflow:hidden;padding-top:1px'],[1836,1,'','height:20px;background:#ccc'],[1840,4,'/','overflow:hidden;padding-top:1px'],[1844,1,'','height:20px;background:#bbb'],[1851,7,'1','color:#70107a;padding-top:2px'],[1881,1,'','height:20px;background:#ccc'],[1889,7,'1','color:#70107a;padding-top:2px']])}`);

define('cad-app',()=>`<style>:host{display:flex;flex-direction:column;width:1920px;height:1090px;background:#000}.top{display:flex;height:24px;padding-top:8px}.m{display:flex;height:921px;background:#f0f0f0}.r{display:flex;flex-direction:column;background:#f4f4f4;width:1673px}.r doc-tabs{margin-top:2px}</style>
<div class="top"><quick-bar></quick-bar><help-bar></help-bar></div><ribbon-tabs></ribbon-tabs><cad-ribbon></cad-ribbon><div class="m"><model-browser></model-browser><div class="r"><model-viewport></model-viewport><doc-tabs></doc-tabs></div></div><status-bar></status-bar>`);
</script></body></html>
